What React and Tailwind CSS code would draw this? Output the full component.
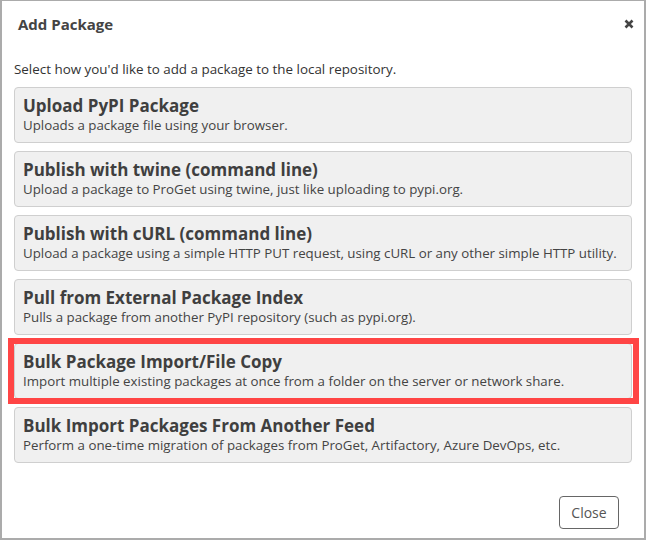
import React from "react";

const items = [
  ["Upload PyPI Package", "Uploads a package file using your browser."],
  ["Publish with twine (command line)", "Upload a package to ProGet using twine, just like uploading to pypi.org."],
  ["Publish with cURL (command line)", "Upload a package using a simple HTTP PUT request, using cURL or any other simple HTTP utility."],
  ["Pull from External Package Index", "Pulls a package from another PyPI repository (such as pypi.org)."],
  ["Bulk Package Import/File Copy", "Import multiple existing packages at once from a folder on the server or network share."],
  ["Bulk Import Packages From Another Feed", "Perform a one-time migration of packages from ProGet, Artifactory, Azure DevOps, etc."],
];

export default function App() {
  return (
    <div
      className="w-[647px] h-[541px] bg-white overflow-hidden"
      style={{ fontFamily: '"Open Sans", "Noto Sans", sans-serif' }}
    >
      <div className="w-[646px] h-[540px] border-2 border-t border-[#ababab] flex flex-col text-[#333]">
        <div className="flex items-start justify-between pl-[16px] pr-[10px] pt-[12px] h-[54px]">
          <div className="text-[15px] font-bold text-[#444]">Add Package</div>
          <svg width="10" height="10" viewBox="0 0 10 10" className="mt-[6px]">
            <path d="M1.5 1.5 L8.5 8.5 M8.5 1.5 L1.5 8.5" stroke="#444" strokeWidth="2.6" strokeLinecap="butt" />
          </svg>
        </div>
        <div className="px-[12px]">
          <div className="text-[13.4px] text-[#333] leading-[18px] mb-[9px] mt-[5px]">
            Select how you'd like to add a package to the local repository.
          </div>
          <div className="flex flex-col gap-2">
            {items.map(([t, d], i) => (
              <div
                key={i}
                className="relative h-[56px] rounded-[4px] border border-[#cfcfcf] bg-[#f0f0f0] px-[8px] pt-[6px]"
              >
                <div className="text-[17px] font-bold text-[#3f3f3f] leading-[23px]">{t}</div>
                <div className="text-[13.3px] text-[#444] leading-[17px]">{d}</div>
                {i === 4 && (
                  <span className="pointer-events-none absolute -top-[6px] -bottom-[6px] -left-[7px] -right-[8px] border-[6px] border-[#ff4545]" />
                )}
              </div>
            ))}
          </div>
        </div>
        <div className="flex-1" />
        <div className="flex justify-end pr-[25px] pb-[9px]">
          <button className="w-[60px] h-[33px] rounded-[4px] border border-[#666] bg-white text-[14px] text-[#555]">
            Close
          </button>
        </div>
      </div>
    </div>
  );
}
